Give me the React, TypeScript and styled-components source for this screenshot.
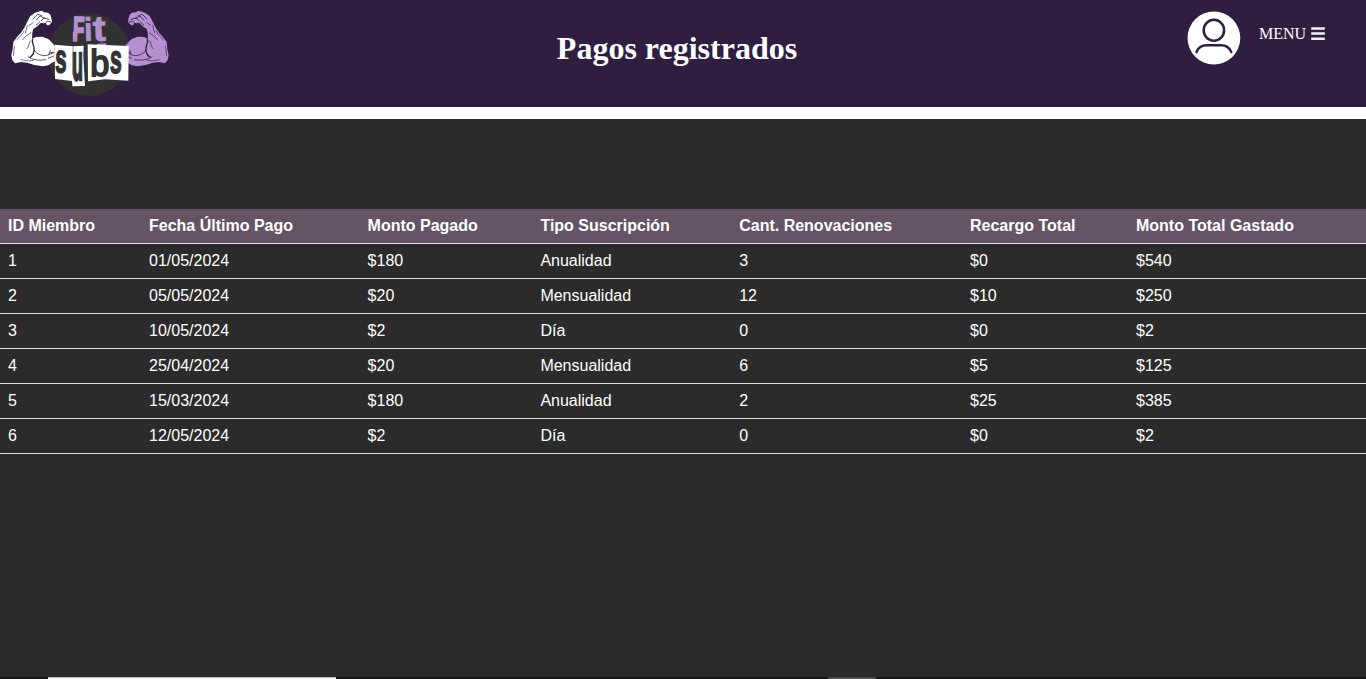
import React from "react";
import styled, { createGlobalStyle } from "styled-components";

const GlobalStyle = createGlobalStyle`
  * { box-sizing: border-box; }
  body { margin: 0; background: #2b2b2b; overflow: hidden; }
`;

const Page = styled.div`
  display: flex;
  flex-direction: column;
  height: 100vh;
  background: #2b2b2b;
  color: #fff;
  font-family: "Liberation Sans", Arial, sans-serif;
`;

const Header = styled.header`
  display: grid;
  grid-template-columns: 187px 1fr 187px;
  flex: none;
  height: 119px;
  background: #301e41;
  border-bottom: 12px solid #fff;
  font-family: "Liberation Serif", "Times New Roman", serif;
`;

const Title = styled.h1`
  margin: 0;
  padding: 30px 12px 0 0;
  font-size: 32px;
  line-height: 37px;
  font-weight: bold;
  text-align: center;
`;

const HeaderActions = styled.div`
  display: flex;
  align-items: flex-start;
  padding: 11px 0 0 8px;
`;

const MenuButton = styled.a`
  display: flex;
  align-items: center;
  gap: 5px;
  margin: 13px 0 0 18px;
  font-size: 16px;
  line-height: 19px;
  color: #fff;
`;

const Content = styled.main`
  flex: 1;
  padding-top: 90px;
`;

const Table = styled.table`
  width: 100%;
  table-layout: fixed;
  border-collapse: separate;
  border-spacing: 0;
  font-size: 16px;
  line-height: 18px;
`;

const Column = styled.col<{ $width?: number }>`
  width: ${({ $width }) => ($width ? `${$width}px` : "auto")};
`;

const Row = styled.tr<{ $head?: boolean }>`
  background: ${({ $head }) => ($head ? "#655366" : "transparent")};
`;

const HeadCell = styled.th`
  height: 35px;
  padding: 8px;
  border-bottom: 1px solid #ddd;
  text-align: left;
  white-space: nowrap;
`;

const Cell = styled.td`
  height: 35px;
  padding: 8px;
  border-bottom: 1px solid #ddd;
  text-align: left;
`;

const BottomBar = styled.footer`
  display: grid;
  grid-template-columns: 48px 288px 492px 48px 1fr;
  flex: none;
  height: 2px;
  background: #1b161a;
`;

const BarSegment = styled.span<{ $column: number; $color: string; $edge: string }>`
  grid-column: ${({ $column }) => $column};
  background: ${({ $color }) => $color};
  border-top: 1px solid ${({ $edge }) => $edge};
`;

const LogoText = styled.text<{ $light?: boolean }>`
  font-family: "Liberation Sans", Arial, sans-serif;
  font-weight: ${({ $light }) => ($light ? "normal" : "bold")};
  vector-effect: non-scaling-stroke;
`;

function Arm({ color, line }: { color: string; line: string }) {
  return (
    <g strokeLinejoin="round" strokeLinecap="round">
      <path
        fill={color}
        d="M83 63 L91 48 L105 38 L119 34 L126 32 L132 37 L144 38 L151 44 L154 54 L156 66 L148 75 L141 76 L137 69 L129 70 L123 68 L116 75 L108 82 L100 86 L97 98 L96 116 L108 111 L127 110 L145 117 L156 128 L164 137 L165 184 L156 188 L145 196 L128 199 L103 195 L81 188 L63 186 L45 190 L37 180 L34 166 L38 147 L40 126 L51 111 L63 98 L73 83 Z"
      />
      <g fill="none" stroke={line} strokeWidth="2.3">
        <path d="M98 118 C94 123 101 134 102 144 C104 158 98 166 90 172" strokeWidth="4" />
        <path d="M102 150 C110 165 133 171 147 164 L161 158 M146 163 L151 151 M149 158 L162 157" />
        <path d="M84 170 C98 181 118 182 137 179 M145 175 L160 169" />
        <path d="M63 179 C75 182 87 184 99 181 M50 120 C58 109 70 102 72 93" strokeWidth="1.8" />
        <path d="M44 139 C40 147 43 156 40 166 M68 119 C76 107 85 105 93 98 M91 123 C85 131 88 140 80 147" strokeWidth="2" />
        <path d="M82 76 L76 99 M88 76 L99 68" strokeWidth="2" />
        <path d="M99 57 L113 43 L125 47 M109 60 L120 48 L134 55 M124 62 L131 54 L147 58 M137 69 L142 63 L152 66 M109 75 L119 66" strokeWidth="2.4" />
      </g>
    </g>
  );
}

function Logo() {
  return (
    <svg width="180" height="107" viewBox="0 0 540 321" role="img" aria-label="Fit Subs">
      <circle cx="268" cy="164" r="124" fill="#323232" />
      <Arm color="#fff" line="#301e41" />
      <g transform="translate(540 0) scale(-1 1)">
        <Arm color="#b58fd1" line="#301e41" />
      </g>
      <g fill="#b58fd1" stroke="#b58fd1" strokeWidth="1">
        <LogoText transform="translate(218 121) rotate(2) scale(.54 1)" fontSize="101" strokeWidth="1.8">F</LogoText>
        <path d="M219 96 L225 96 L223 120 L219 126 Z" />
        <LogoText transform="translate(254 122) rotate(-2) scale(.86 1)" fontSize="97">i</LogoText>
        <LogoText transform="translate(280 123) rotate(-2) scale(1.08 1)" fontSize="107">t</LogoText>
        <path d="M291 132 L318 130 L318 137 L291 136 Z" />
      </g>
      <path fill="#fff" d="M164 134 L218 139 L251 137 L250 168 L255 258 L217 259 L216 243 L165 237 Z" />
      <path fill="#fff" d="M263 133 L386 138 L385 242 L315 238 L264 244 Z" />
      <path d="M219 139 L218 225" stroke="#323232" strokeWidth="1.5" fill="none" />
      <g fill="#323232" stroke="#323232">
        <LogoText transform="translate(165 217) rotate(1) scale(.51 1)" fontSize="121" strokeWidth="1.2">s</LogoText>
        <LogoText transform="translate(217 240) scale(.33 1)" fontSize="158" strokeWidth="2">u</LogoText>
        <LogoText $light transform="translate(271 228) scale(.95 1)" fontSize="108" strokeWidth="1.8">b</LogoText>
        <LogoText transform="translate(329 218) rotate(1) scale(.53 1)" fontSize="121" strokeWidth="1.2">s</LogoText>
      </g>
    </svg>
  );
}

function UserAvatar() {
  return (
    <svg width="54" height="54" viewBox="0 0 54 54" aria-label="Usuario">
      <circle cx="26.9" cy="27" r="26.4" fill="#fff" />
      <g fill="none" stroke="#301e41" strokeWidth="2.5" strokeLinecap="round">
        <ellipse cx="26.9" cy="19.3" rx="10.2" ry="10.5" />
        <path d="M9.5 41 C11 37 15 34.3 20 34.3 H34 C39 34.3 42.5 37 44.3 41" />
      </g>
    </svg>
  );
}

function MenuIcon() {
  return (
    <svg width="14" height="14" viewBox="0 0 14 14" aria-hidden="true">
      <path d="M.2 1.4H13.8 M.2 6.6H13.8 M.2 11.8H13.8" stroke="#f5f2f6" strokeWidth="2.5" />
    </svg>
  );
}

const columns = [
  { label: "ID Miembro", width: 141 },
  { label: "Fecha Último Pago", width: 218.6 },
  { label: "Monto Pagado", width: 172.8 },
  { label: "Tipo Suscripción", width: 198.8 },
  { label: "Cant. Renovaciones", width: 230.8 },
  { label: "Recargo Total", width: 166 },
  { label: "Monto Total Gastado" },
];

const payments = [
  ["1", "01/05/2024", "$180", "Anualidad", "3", "$0", "$540"],
  ["2", "05/05/2024", "$20", "Mensualidad", "12", "$10", "$250"],
  ["3", "10/05/2024", "$2", "Día", "0", "$0", "$2"],
  ["4", "25/04/2024", "$20", "Mensualidad", "6", "$5", "$125"],
  ["5", "15/03/2024", "$180", "Anualidad", "2", "$25", "$385"],
  ["6", "12/05/2024", "$2", "Día", "0", "$0", "$2"],
];

export default function App() {
  return (
    <Page>
      <GlobalStyle />
      <Header>
        <Logo />
        <Title>Pagos registrados</Title>
        <HeaderActions>
          <UserAvatar />
          <MenuButton>
            MENU
            <MenuIcon />
          </MenuButton>
        </HeaderActions>
      </Header>
      <Content>
        <Table>
          <colgroup>
            {columns.map((c) => (
              <Column key={c.label} $width={c.width} />
            ))}
          </colgroup>
          <thead>
            <Row $head>
              {columns.map((c) => (
                <HeadCell key={c.label}>{c.label}</HeadCell>
              ))}
            </Row>
          </thead>
          <tbody>
            {payments.map((payment) => (
              <Row key={payment[0]}>
                {payment.map((value, i) => (
                  <Cell key={i}>{value}</Cell>
                ))}
              </Row>
            ))}
          </tbody>
        </Table>
      </Content>
      <BottomBar>
        <BarSegment $column={2} $color="#fafafa" $edge="#bcbcbc" />
        <BarSegment $column={4} $color="#514c50" $edge="#484848" />
      </BottomBar>
    </Page>
  );
}
